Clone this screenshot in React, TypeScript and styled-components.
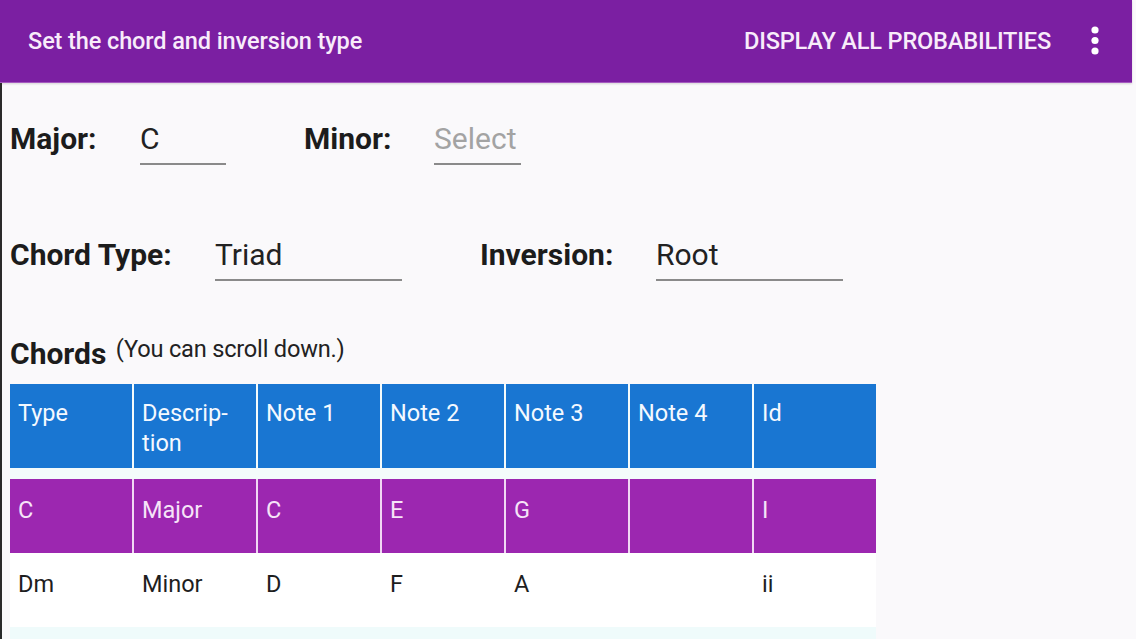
import React from 'react';
import styled, { createGlobalStyle } from 'styled-components';

const GlobalStyle = createGlobalStyle`
  html, body {
    margin: 0;
    padding: 0;
    overflow: hidden;
    background: #faf9fb;
    font-family: Roboto, "Liberation Sans", sans-serif;
  }
`;

type Chord = {
  type: string;
  description: string;
  notes: string[];
  id: string;
};

const columns = ['Type', 'Descrip\u00ADtion', 'Note 1', 'Note 2', 'Note 3', 'Note 4', 'Id'];

const chords: Chord[] = [
  { type: 'C', description: 'Major', notes: ['C', 'E', 'G', ''], id: 'I' },
  { type: 'Dm', description: 'Minor', notes: ['D', 'F', 'A', ''], id: 'ii' },
];

const rowThemes = [
  { bg: '#9c27b0', gap: '#f1d7f4', color: '#f6e4f8' },
  { bg: '#ffffff', gap: '#ffffff', color: '#1e1e1e' },
];

const App = () => {
  return (
    <>
      <GlobalStyle />
      <Page>
        <AppBar>
          <Title>Set the chord and inversion type</Title>
          <Actions>
            <ActionButton>DISPLAY ALL PROBABILITIES</ActionButton>
            <MenuButton aria-label="More options">
              <svg width="10" height="30" viewBox="0 0 10 30">
                <circle cx="5" cy="4" r="3.6" fill="#fff" />
                <circle cx="5" cy="14.5" r="3.6" fill="#fff" />
                <circle cx="5" cy="25" r="3.6" fill="#fff" />
              </svg>
            </MenuButton>
          </Actions>
        </AppBar>

        <Content>
          <FieldRow $top={38}>
            <Label $width={130}>Major:</Label>
            <Select $width={86}>C</Select>
            <Label $width={130} $gap={78}>Minor:</Label>
            <Select $width={87} $placeholder>Select</Select>
          </FieldRow>

          <FieldRow $top={72}>
            <Label $width={205}>Chord Type:</Label>
            <Select $width={187}>Triad</Select>
            <Label $width={176} $gap={78}>Inversion:</Label>
            <Select $width={187}>Root</Select>
          </FieldRow>

          <Heading>
            Chords <Hint>(You can scroll down.)</Hint>
          </Heading>

          <Table>
            <HeaderRow>
              {columns.map((c) => (
                <HeaderCell key={c}>{c}</HeaderCell>
              ))}
            </HeaderRow>
            {chords.map((ch, i) => (
              <Row key={ch.type} $gap={rowThemes[i].gap}>
                {[ch.type, ch.description, ...ch.notes, ch.id].map((v, j) => (
                  <Cell key={j} $bg={rowThemes[i].bg} $color={rowThemes[i].color}>
                    {v}
                  </Cell>
                ))}
              </Row>
            ))}
          </Table>
        </Content>
      </Page>
    </>
  );
};

const Page = styled.div`
  width: 1136px;
  height: 639px;
  overflow: hidden;
  background: #faf9fb;
  display: flex;
  flex-direction: column;
`;

const AppBar = styled.header`
  flex: none;
  height: 83px;
  width: 1132px;
  box-sizing: border-box;
  background: #7b1fa2;
  border-bottom: 1px solid #a55ac0;
  display: flex;
  align-items: center;
  justify-content: space-between;
  padding: 0 0 0 28px;
  box-shadow: 0 1px 2px rgba(0, 0, 0, 0.15);
`;

const Title = styled.h1`
  margin: 0;
  font-size: 23.5px;
  font-weight: 500;
  color: #f8ecfa;
  letter-spacing: -0.1px;
`;

const Actions = styled.div`
  display: flex;
  align-items: center;
`;

const ActionButton = styled.button`
  border: 0;
  background: transparent;
  font-family: inherit;
  font-size: 23.6px;
  font-weight: 500;
  color: #f8ecfa;
  padding: 0;
  margin-right: 39px;
  letter-spacing: -0.2px;
`;

const MenuButton = styled.button`
  border: 0;
  background: transparent;
  padding: 0;
  margin-right: 32px;
  display: flex;
  align-items: center;
`;

const Content = styled.main`
  flex: 1;
  min-height: 0;
  display: flex;
  flex-direction: column;
  border-left: 2px solid #2a2a2a;
  padding-left: 8px;
`;

const FieldRow = styled.div<{ $top: number }>`
  display: flex;
  align-items: baseline;
  margin-top: ${(p) => p.$top}px;
`;

const Label = styled.span<{ $width: number; $gap?: number }>`
  width: ${(p) => p.$width}px;
  margin-left: ${(p) => p.$gap ?? 0}px;
  font-size: 30px;
  font-weight: 700;
  color: #1c1c1c;
`;

const Select = styled.div<{ $width: number; $placeholder?: boolean }>`
  width: ${(p) => p.$width}px;
  font-size: 30px;
  line-height: 36px;
  padding-bottom: 6px;
  border-bottom: 2px solid #8a8a8a;
  color: ${(p) => (p.$placeholder ? '#a3a3a3' : '#222')};
`;

const Heading = styled.h2`
  margin: 50px 0 0;
  font-size: 30px;
  line-height: 36px;
  font-weight: 700;
  color: #1c1c1c;
`;

const Hint = styled.span`
  font-size: 23.6px;
  font-weight: 400;
  color: #222;
  letter-spacing: -0.2px;
  vertical-align: 7px;
  margin-left: 2px;
`;

const Table = styled.div`
  flex: 1;
  margin-top: 12px;
  width: 866px;
  display: flex;
  flex-direction: column;
  background: #effbfb;
`;

const HeaderRow = styled.div`
  display: grid;
  grid-template-columns: repeat(7, 122px);
  column-gap: 2px;
  background: #f4fbfb;
  height: 84px;
  border-bottom: 11px solid #f4fbfb;
`;

const HeaderCell = styled.div`
  background: #1976d2;
  color: #f4f9ff;
  font-size: 23.5px;
  line-height: 30px;
  padding: 14px 8px 0;
`;

const Row = styled.div<{ $gap: string }>`
  display: grid;
  grid-template-columns: repeat(7, 122px);
  column-gap: 2px;
  height: 74px;
  background: ${(p) => p.$gap};
`;

const Cell = styled.div<{ $bg: string; $color: string }>`
  background: ${(p) => p.$bg};
  color: ${(p) => p.$color};
  font-size: 23.5px;
  line-height: 30px;
  padding: 16px 8px 0;
`;

export default App;
